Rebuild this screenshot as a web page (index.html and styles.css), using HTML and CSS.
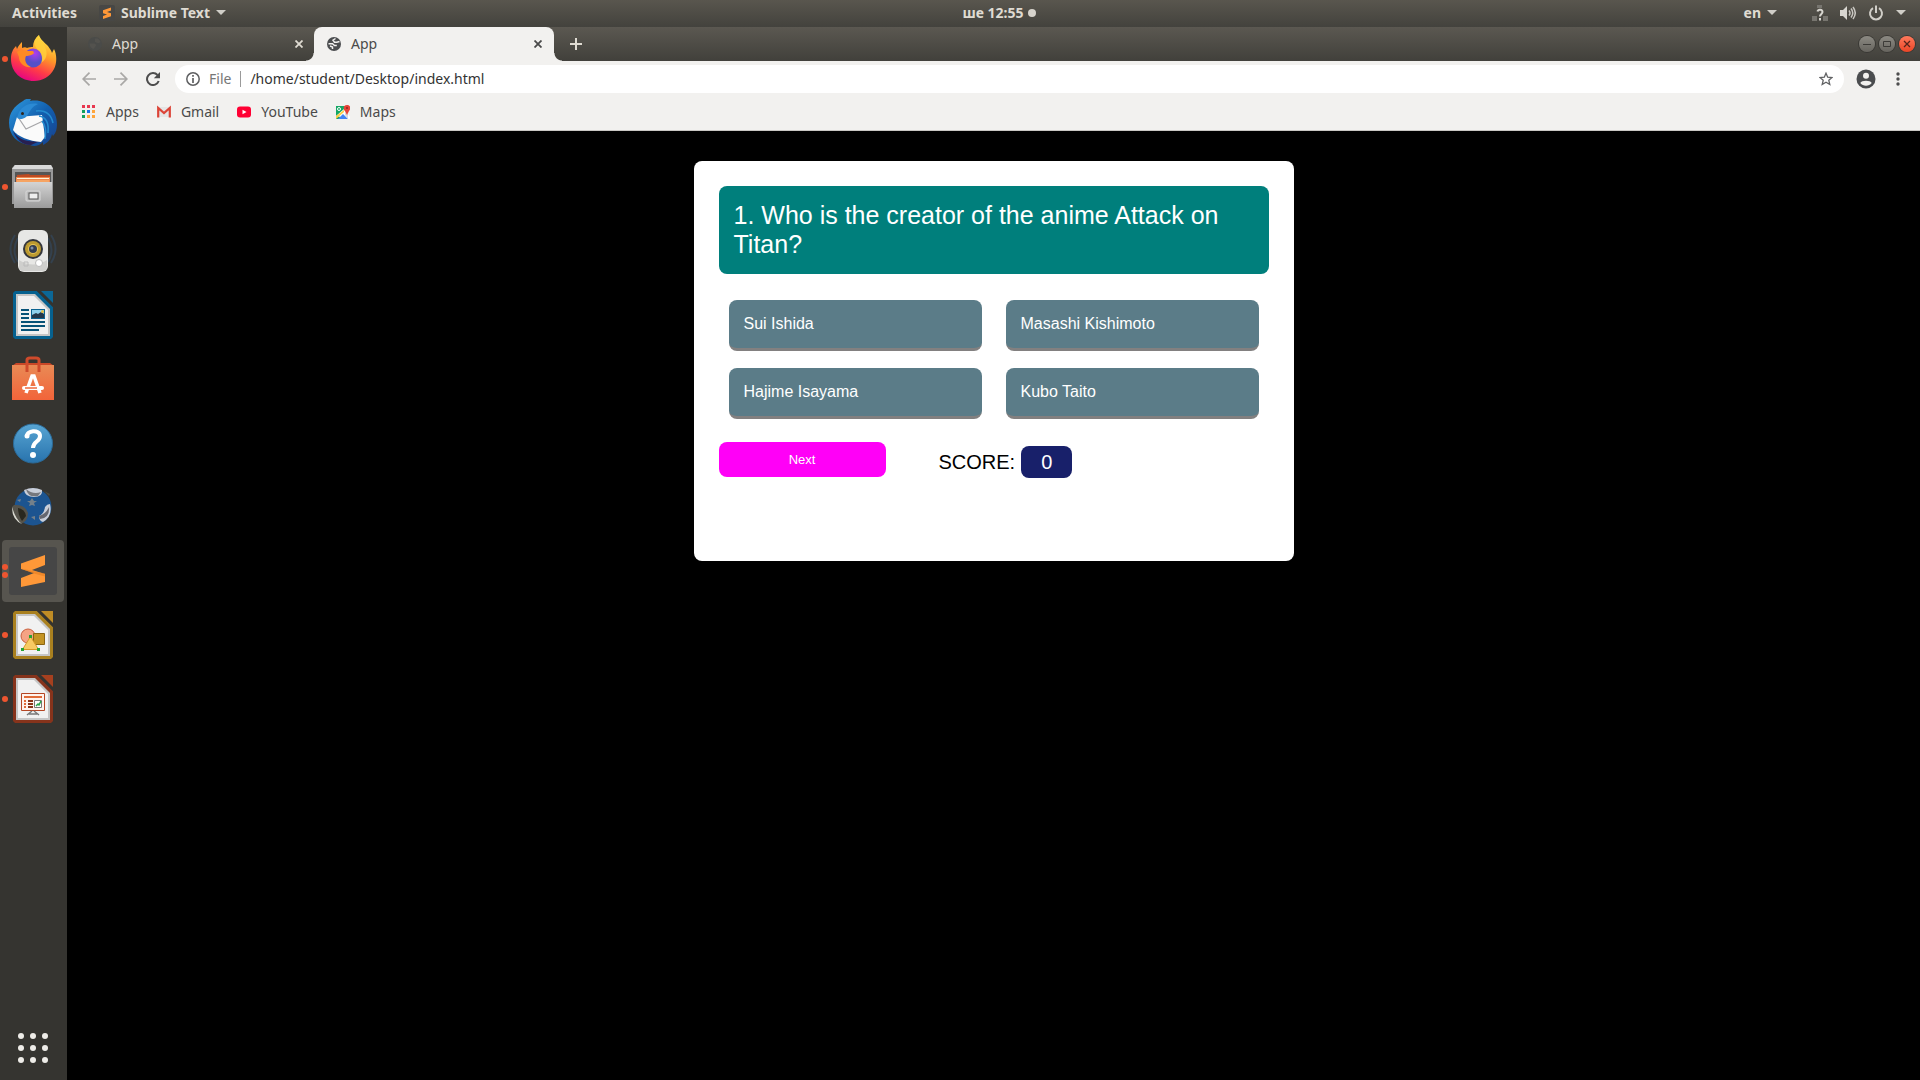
FILE: index.html
```html
<!DOCTYPE html>
<html lang="en">
<head>
<meta charset="utf-8">
<title>App</title>
<link rel="stylesheet" href="styles.css">
</head>
<body class="desktop">
<header class="topbar">
  <div class="topbar-left">
    <button class="top-item" type="button">Activities</button>
    <button class="top-item app-menu" type="button">
      <svg width="16" height="16" viewBox="0 0 16 16" aria-hidden="true"><rect width="16" height="16" rx="2" fill="#474745"/><path fill="#ff9838" d="M4 5.200 12 2.600v3L8 7l4 1.300v3L4 14v-3l4-1.400-4-1.300z"/></svg>
      <span>Sublime Text</span>
      <i class="caret"></i>
    </button>
  </div>
  <button class="top-item clock" type="button">ше 12:55<i class="notice"></i></button>
  <div class="topbar-right">
    <button class="top-item lang" type="button">en<i class="caret"></i></button>
    <button class="top-item status" type="button" aria-label="System">
      <svg width="16" height="16" viewBox="0 0 16 16" aria-hidden="true"><path fill="#77756f" d="M5 0h5v3H5zM0 11h5v5H0zM11 11h5v5h-5z"/><path d="M5.500 6.500C6 4 10.500 4 10.500 7c0 2-2.500 2-2.500 4.500M8 13v2.500" fill="none" stroke="#d8d6d0" stroke-width="2"/></svg>
      <svg width="16" height="16" viewBox="0 0 16 16" aria-hidden="true"><path fill="#d8d6d0" d="M0 5h3l4-4v14l-4-4H0z"/><path d="M9 5.500q2 2.500 0 5M11 3.500q3.500 4.500 0 9M13 2q4.500 6 0 12" fill="none" stroke="#c8c6c0" stroke-width="1.500"/></svg>
      <svg width="16" height="16" viewBox="0 0 16 16" aria-hidden="true"><path d="M5 3.200a6 6 0 1 0 6 0M8 .5V8" fill="none" stroke="#d0cec8" stroke-width="2"/></svg>
      <i class="caret"></i>
    </button>
  </div>
</header>
<div class="workspace">
  <nav class="dock" aria-label="Favourites">
    <button class="dock-item run" type="button" aria-label="Firefox">
      <svg width="48" height="48" viewBox="0 0 48 48" aria-hidden="true">
        <defs><linearGradient id="ff" x1=".75" y1="0" x2=".3" y2="1"><stop offset="0" stop-color="#fff04a"/><stop offset=".4" stop-color="#ff9a28"/><stop offset=".7" stop-color="#ff3c47"/><stop offset="1" stop-color="#e50086"/></linearGradient><radialGradient id="fp" cx=".6" cy=".25"><stop offset="0" stop-color="#b23cf0"/><stop offset="1" stop-color="#5550c8"/></radialGradient></defs>
        <path fill="url(#ff)" d="M30 0c1 4 5 7 9 11 2 3 3 4 4 7l2-4c3 6 3 14 0 20-4 8-12 12-20 12C12 46 2 37 2 24c0-6 2-10 5-13l1 3c1-3 3-5 5-7v6c2-1 4-1 5 0 2-1 4-1 6-1 0-5 2-9 6-12z"/>
        <circle cx="24" cy="23" r="9.500" fill="url(#fp)"/>
        <path fill="#ff8a24" d="M8 17c2-2 5-2 8-1h8l1 2c-1 2-5 3-8 3-2 4 0 9 5 11-7 1-12-4-12-10z"/>
        <path fill="#ffd13c" d="M30 0c-6 5-5 11-1 15 4 3 5 9 3 13 8-5 6-13 3-18-3-4-5-6-5-10z" opacity=".8"/>
      </svg>
    </button>
    <button class="dock-item" type="button" aria-label="Thunderbird">
      <svg width="48" height="48" viewBox="0 0 48 48" aria-hidden="true">
        <defs><linearGradient id="tb" x1="0" y1="0" x2="1" y2="1"><stop offset="0" stop-color="#2f9be0"/><stop offset=".5" stop-color="#125fae"/><stop offset="1" stop-color="#17408c"/></linearGradient></defs>
        <path fill="url(#tb)" d="M14 2q3-3 8-2l-1 2C36-1 48 10 48 25c0 5-1 9-4 12l-1-2c-1 6-5 9-9 11v-3c-4 4-9 5-13 3C8 45 0 36 0 24 0 14 5 7 14 2z"/>
        <path fill="#281f50" d="M4 32c5 8 14 12 27 10l-9 4C13 46 7 40 4 32z"/>
        <path fill="#fafafa" d="M8 18l25-2 3 22-4 5C20 42 9 38 4 31z"/>
        <path d="M9 18l8 12 17-8" fill="none" stroke="#a5a5a8" stroke-width="1.200"/>
        <path fill="#2b8ad4" d="M9 16c2-8 11-13 20-11-7 3-8 8-12 13-4 3-7 2-9 1z"/><circle cx="13.500" cy="14.500" r="1.500" fill="#30251c"/>
        <path d="M27 12c9-1 15 3 17 12M30 17c7 1 10 7 9 17M33 22c4 5 4 9 3 18" fill="none" stroke="#238bcf" stroke-width="1.500"/>
      </svg>
    </button>
    <button class="dock-item run" type="button" aria-label="Files">
      <svg width="48" height="48" viewBox="0 -1 48 48" aria-hidden="true">
        <defs><linearGradient id="fl" x2="0" y2="1"><stop offset="0" stop-color="#d4d4d4"/><stop offset="1" stop-color="#9b9b9b"/></linearGradient></defs>
        <path fill="#999" d="M5 2q0-1 1-1h36l2 3v36H3V4z"/><path fill="#d9d9d9" d="M6 1h36l2 4H3z"/><path fill="#555" d="M6 8h36v12H6z"/>
        <path fill="#bf4a20" d="M8 11l12-1 1 1h20v9H7z"/><path fill="#ee8850" d="M7 13h34v7H7z"/><path fill="#fff2d8" d="M8 14h32v1H8z"/><path fill="#f6a463" d="M8 16h32v3H8z"/>
        <path fill="url(#fl)" d="M5 18h38v26H5z"/><rect x="17" y="27" width="14" height="10" rx="1" fill="#bbb" stroke="#d9d9d9"/><rect x="20" y="29" width="9" height="6" fill="#eee" stroke="#555"/>
      </svg>
    </button>
    <button class="dock-item" type="button" aria-label="Rhythmbox">
      <svg width="48" height="48" viewBox="0 0 48 48" aria-hidden="true">
        <path d="M6 8q-9 14 0 28M9 11q-7 12 0 24M42 8q9 14 0 28M39 11q7 12 0 24" fill="none" stroke="#34414e" stroke-width="2"/>
        <rect x="9" y="3" width="30" height="42" rx="6" fill="#e7e7e5"/><path fill="#cfcfcd" d="M10 33q14 9 28 0v7q0 4-5 4H15q-5 0-5-4z"/>
        <circle cx="24" cy="22" r="10" fill="#34363c"/><circle cx="24" cy="22" r="8" fill="#bc9a30"/><circle cx="24" cy="22" r="5" fill="#e6c455"/><circle cx="24" cy="22" r="4" fill="#343d50"/><circle cx="23" cy="21" r="1.500" fill="#8090a8"/><circle cx="30" cy="36" r="3.500" fill="#fff" stroke="#bcbcbc"/><path d="M15 35h4v4h-4z" fill="none" stroke="#bbb"/>
      </svg>
    </button>
    <button class="dock-item" type="button" aria-label="LibreOffice Writer">
      <svg width="48" height="48" viewBox="0 0 48 48" aria-hidden="true">
        <path fill="#06618f" d="M6 0h22l16 16v30l-2 2H6l-2-2V2z"/><path fill="#34332f" d="M28 0h16v16z"/><path fill="#0c6796" d="M32 0h12v12z"/><path fill="#c5c5c5" d="M7 3h19l15 15v27H7z"/><path fill="#f1f1f1" d="M9 5h16l14 14v24H9z"/>
        <path d="M12 19h8M12 23h8M12 27h8M12 31h24M12 35h24M12 39h18" stroke="#075277" stroke-width="2"/><path fill="#0c6391" d="M22 18h14v10H22z"/><path fill="#8fd1ec" d="M23 19h12v7H23z"/><path fill="#24384b" d="M23 24l4-2 2 1 3-2 3 2v4H23z"/><circle cx="33.500" cy="20.500" r="1.500" fill="#e6be42"/>
      </svg>
    </button>
    <button class="dock-item" type="button" aria-label="Ubuntu Software">
      <svg width="48" height="48" viewBox="0 0 48 48" aria-hidden="true">
        <defs><linearGradient id="us" x2="0" y2="1"><stop offset="0" stop-color="#e98a55"/><stop offset="1" stop-color="#f2643a"/></linearGradient></defs>
        <path fill="#c94727" d="M3 11l4-3h34l4 3z"/><path fill="url(#us)" d="M3 10h42v35H3z"/><path d="M18 17V5q0-2 3-2h6q3 0 3 2v12" fill="none" stroke="#cf4a2b" stroke-width="3"/>
        <path d="M17 38l6-17h2l6 17" fill="none" stroke="#fff" stroke-width="3.500"/><path d="M15 33h18" stroke="#fff" stroke-width="4" stroke-linecap="round"/><path d="M16 33h12" stroke="#ef6a3d" stroke-width="1.500"/>
      </svg>
    </button>
    <button class="dock-item" type="button" aria-label="Help">
      <svg width="48" height="48" viewBox="0 0 48 48" aria-hidden="true">
        <defs><linearGradient id="hp" x2="0" y2="1"><stop offset="0" stop-color="#58a5d3"/><stop offset="1" stop-color="#2873ad"/></linearGradient></defs>
        <circle cx="24" cy="24.500" r="19.500" fill="url(#hp)" stroke="#2b6b99"/><path d="M18 18c-1-7 13-8 13-1 0 6-7 5-7 12" fill="none" stroke="#fff" stroke-width="4"/><circle cx="18" cy="17" r="2.500" fill="#fff"/><circle cx="24" cy="36" r="3" fill="#fff"/>
      </svg>
    </button>
    <button class="dock-item" type="button" aria-label="Globe">
      <svg width="48" height="48" viewBox="0 0 48 48" aria-hidden="true">
        <circle cx="24" cy="24" r="18.500" fill="#1c5490"/><path fill="#4b493f" d="M35 8l6 3-1 2z"/><path fill="#c9ced9" d="M15 7q9-4 18 0 1 7-8 7-9 0-10-7z"/><path fill="#76787e" d="M17 6q7 6 15 3l-3 4q-10 2-12-7z"/>
        <path fill="#55534b" d="M5 22q11-1 14 8 0 8-7 11Q3 34 3 24z"/><path fill="#d8d8cf" d="M3 24q4 13 10 17Q3 37 3 24z"/><path fill="#29281f" d="M9 25q7 1 8 8l-4 5q-4-6-4-13z"/><path fill="#c9ced8" d="M41 21q3 12-7 18-4-1-4-6 5-2 6-9 2-3 5-3z"/><path fill="#65676f" d="M40 24q1 11-9 12-1-2-1-3 7-2 10-9z"/>
        <path fill="#74808a" d="M23 15l2 3h3l-3 2 1 3-3-1-3 1 1-3-3-2h3zM22 34l4-1v4zM8 17l4-1-1 3z"/>
      </svg>
    </button>
    <button class="dock-item run two active" type="button" aria-label="Sublime Text">
      <svg width="48" height="48" viewBox="0 0 48 48" aria-hidden="true">
        <rect width="48" height="48" rx="3" fill="#464646"/><path fill="#ff9838" d="M12 16.500 36 8v10l-13 5 13 4v8l-24 5V31l13-5-13-4z"/><path fill="#e47d20" d="M12 21.500 36 26.500v3L23 26z" opacity=".6"/>
      </svg>
    </button>
    <button class="dock-item run" type="button" aria-label="LibreOffice Draw">
      <svg width="48" height="48" viewBox="0 0 48 48" aria-hidden="true">
        <path fill="#a9801f" d="M6 0h22l16 16v30l-2 2H6l-2-2V2z"/><path fill="#34332f" d="M28 0h16v16z"/><path fill="#bf8c25" d="M32 0h12v12z"/><path fill="#c5c5c5" d="M7 3h19l15 15v27H7z"/><path fill="#f1f1f1" d="M9 5h16l14 14v24H9z"/>
        <circle cx="19" cy="25" r="7" fill="#f5a384" stroke="#c95f3d"/><path fill="#c49424" stroke="#8b6410" d="M24.500 22.500h11v11h-11z"/><path fill="#f8ca63" stroke="#d59a28" d="M21.500 25.500l8 13h-16z"/><path fill="#26a334" d="M20 24h3v3h-3zM12 37h3v3h-3zM28 37h3v3h-3z"/>
      </svg>
    </button>
    <button class="dock-item run" type="button" aria-label="LibreOffice Impress">
      <svg width="48" height="48" viewBox="0 0 48 48" aria-hidden="true">
        <path fill="#86331b" d="M6 0h22l16 16v30l-2 2H6l-2-2V2z"/><path fill="#34332f" d="M28 0h16v16z"/><path fill="#a6401f" d="M32 0h12v12z"/><path fill="#c5c5c5" d="M7 3h19l15 15v27H7z"/><path fill="#f1f1f1" d="M9 5h16l14 14v24H9z"/>
        <path fill="#fff3ed" stroke="#b44523" d="M12.500 18.500h23v17h-23z"/><path d="M15 22h18" stroke="#e06b38" stroke-width="2"/><path d="M15 26h2M15 29h2M15 32h2" stroke="#e06b38" stroke-width="2"/><path d="M19 26h5M19 29h5M19 32h5" stroke="#8a3518" stroke-width="2"/><path fill="#fff" stroke="#777" d="M25.500 25.500h7v7h-7z"/><path d="M27 31l2-2 1 1 2-4" fill="none" stroke="#27a447" stroke-width="1.500"/><path d="M23 36l-5 4M25 36l5 4M20 39h8" stroke="#777" stroke-width="1.500"/>
      </svg>
    </button>
    <button class="dock-item apps" type="button" aria-label="Show Applications">
      <svg width="48" height="48" viewBox="0 0 48 48" fill="#eeece8" aria-hidden="true"><circle cx="12" cy="12" r="3"/><circle cx="24" cy="12" r="3"/><circle cx="36" cy="12" r="3"/><circle cx="12" cy="24" r="3"/><circle cx="24" cy="24" r="3"/><circle cx="36" cy="24" r="3"/><circle cx="12" cy="36" r="3"/><circle cx="24" cy="36" r="3"/><circle cx="36" cy="36" r="3"/></svg>
    </button>
  </nav>
  <div class="browser">
    <div class="tabstrip">
      <div class="tab">
        <svg width="14" height="14" viewBox="0 0 14 14" aria-hidden="true"><circle cx="7" cy="7" r="7" fill="#4a4b49"/><path fill="#53524e" d="M7 1.500h3Q12 3 12.500 5L11 6H9.500L7 5zM1.500 6.500h5l2 1.500-3 4Q2 11 1.500 6.500z"/></svg>
        <a class="tab-title" href="#">App</a>
        <button class="close" type="button" aria-label="Close tab"><svg width="8" height="8" viewBox="0 0 8 8" aria-hidden="true"><path d="M0.500 0.500l7 7M7.500 .5l-7 7" stroke="currentColor" stroke-width="1.800"/></svg></button>
      </div>
      <div class="tab current">
        <svg width="14" height="14" viewBox="0 0 14 14" aria-hidden="true"><circle cx="7" cy="7" r="7" fill="#4b4d4f"/><path d="M8.500 1.500 6 3.200l1.500 2h2.300l2.700-.7M1.500 6.800h4l2 1.700h2.300M3 9l2.500 1v2" fill="none" stroke="#f2f1ef" stroke-width="1.500"/></svg>
        <a class="tab-title" href="#">App</a>
        <button class="close" type="button" aria-label="Close tab"><svg width="8" height="8" viewBox="0 0 8 8" aria-hidden="true"><path d="M0.500 0.500l7 7M7.500 .5l-7 7" stroke="currentColor" stroke-width="1.800"/></svg></button>
      </div>
      <button class="new-tab" type="button" aria-label="New tab"><svg width="12" height="12" viewBox="0 0 12 12" aria-hidden="true"><path d="M6 0v12M0 6h12" stroke="currentColor" stroke-width="2"/></svg></button>
      <div class="window-buttons">
        <button class="win" type="button" aria-label="Minimize"><svg width="16" height="16" viewBox="0 0 16 16" aria-hidden="true"><path d="M4 8.500h8" stroke="#3c3b37"/></svg></button>
        <button class="win" type="button" aria-label="Maximize"><svg width="16" height="16" viewBox="0 0 16 16" aria-hidden="true"><path d="M4.500 5.500h7v5h-7z" stroke="#3c3b37" fill="none"/></svg></button>
        <button class="win quit" type="button" aria-label="Close"><svg width="16" height="16" viewBox="0 0 16 16" aria-hidden="true"><path d="M5 5l6 6M11 5l-6 6" stroke="#55241b" stroke-width="1.300"/></svg></button>
      </div>
    </div>
    <div class="toolbar">
      <button class="tool" type="button" aria-label="Back"><svg width="14" height="14" viewBox="0 0 14 14" aria-hidden="true"><path d="M14 7H1M7.500 .7 1.200 7l6.300 6.300" fill="none" stroke="#a9a8a6" stroke-width="1.700"/></svg></button>
      <button class="tool" type="button" aria-label="Forward"><svg width="14" height="14" viewBox="0 0 14 14" aria-hidden="true"><path d="M0 7h13M6.500 .7 12.800 7l-6.300 6.300" fill="none" stroke="#a9a8a6" stroke-width="1.700"/></svg></button>
      <button class="tool" type="button" aria-label="Reload"><svg width="14" height="14" viewBox="0 0 14 14" aria-hidden="true"><path d="M12.700 9A6 6 0 1 1 11.500 3" fill="none" stroke="#4d4d4d" stroke-width="2"/><path fill="#4d4d4d" d="M14 0v6.200H7.800z"/></svg></button>
      <div class="omnibox">
        <svg width="14" height="14" viewBox="0 0 14 14" aria-hidden="true"><circle cx="7" cy="7" r="6.200" fill="none" stroke="#5f6062" stroke-width="1.500"/><path d="M7 6v5M7 3v1.700" stroke="#5f6062" stroke-width="1.700"/></svg>
        <label class="scheme" for="address">File</label>
        <input class="address" id="address" type="text" value="/home/student/Desktop/index.html">
        <button class="tool star" type="button" aria-label="Bookmark this page"><svg width="14" height="14" viewBox="0 0 14 14" aria-hidden="true"><path d="M7 1.200l1.700 4 4.300.3-3.200 2.800 1 4.200L7 10.300l-3.800 2.200 1-4.200L1 5.500l4.300-.3z" fill="none" stroke="#606163" stroke-width="1.300"/></svg></button>
      </div>
      <button class="tool profile" type="button" aria-label="Profile"><svg width="20" height="20" viewBox="0 0 20 20" aria-hidden="true"><circle cx="10" cy="10" r="9.500" fill="#4a4c4e"/><circle cx="10" cy="6.700" r="3" fill="#f2f1ef"/><path fill="#f2f1ef" d="M4.300 14C5.300 11 14.700 11 15.700 14 13 17.500 7 17.500 4.300 14z"/></svg></button>
      <button class="tool" type="button" aria-label="Menu"><svg width="14" height="14" viewBox="0 0 14 14" fill="#4d4d4d" aria-hidden="true"><circle cx="7" cy="2" r="1.700"/><circle cx="7" cy="7" r="1.700"/><circle cx="7" cy="12" r="1.700"/></svg></button>
    </div>
    <nav class="bookmarks" aria-label="Bookmarks">
      <a class="mark" href="#"><svg width="14" height="14" viewBox="0 0 14 14" aria-hidden="true"><path fill="#e8384f" d="M0 0h3v3H0zM5 0h3v3H5zM10 0h3v3h-3z"/><path fill="#12a05c" d="M0 5h3v3H0zM0 10h3v3H0z"/><path fill="#1a73e8" d="M5 5h3v3H5z"/><path fill="#ffa53a" d="M10 5h3v3h-3zM5 10h3v3H5zM10 10h3v3h-3z"/></svg>Apps</a>
      <a class="mark" href="#"><svg width="14" height="14" viewBox="0 0 14 14" aria-hidden="true"><path fill="#e5e5e5" d="M1 2h12v10H1z"/><path d="M1.200 12.500V3L7 8l5.800-5v9.500" fill="none" stroke="#dc4437" stroke-width="2.200"/></svg>Gmail</a>
      <a class="mark" href="#"><svg width="14" height="14" viewBox="0 0 14 14" aria-hidden="true"><rect y="1.500" width="14" height="11" rx="3" fill="#ff0033"/><path fill="#fff" d="M5.500 4.800 9.500 7l-4 2.200z"/></svg>YouTube</a>
      <a class="mark" href="#"><svg width="14" height="14" viewBox="0 0 14 14" aria-hidden="true"><path fill="#16a765" d="M0 1h10v13H0z"/><path fill="#fff" d="M0 11 8 4l6 8v2z"/><path fill="#ffcf44" d="M0 11 8 5v2l-8 7z"/><path fill="#4285f4" d="M2 14l5-5 5 5z"/><path fill="#dadada" d="M9 7l3 2v5l-3-4z"/><circle cx="3" cy="4" r="1.500" fill="none" stroke="#fff"/><path fill="#e84338" d="M11 0c4 0 4 4 2 6l-2 4-2-4c-2-2-2-6 2-6z"/><circle cx="11" cy="3" r="1" fill="#8e2820"/></svg>Maps</a>
    </nav>
    <main class="page">
      <section class="quiz">
        <h1 class="question">1. Who is the creator of the anime Attack on Titan?</h1>
        <div class="options">
          <button class="option" type="button">Sui Ishida</button>
          <button class="option" type="button">Masashi Kishimoto</button>
          <button class="option" type="button">Hajime Isayama</button>
          <button class="option" type="button">Kubo Taito</button>
        </div>
        <div class="actions">
          <button class="next" type="button">Next</button>
          <p class="score">SCORE: <output class="points">0</output></p>
        </div>
      </section>
    </main>
  </div>
</div>
</body>
</html>
```
FILE: styles.css
```css
* { box-sizing: border-box; }
button { margin: 0; padding: 0; border: 0; background: none; color: inherit; font: inherit; }
svg { display: block; flex: none; }
a { color: inherit; text-decoration: none; }

.desktop {
  margin: 0;
  min-height: 100vh;
  display: flex;
  flex-direction: column;
  background: #000;
  font: 14px/20px "Noto Sans", "Open Sans", sans-serif;
}

/* System bar */
.topbar {
  display: grid;
  grid-template-columns: 1fr auto 1fr;
  align-items: center;
  height: 27px;
  padding: 0 14px 2px 12px;
  background: linear-gradient(#59564e, #43423d);
  color: #dfdbd2;
  font-weight: 700;
}
.topbar-left, .topbar-right, .top-item { display: flex; align-items: center; }
.topbar-left { gap: 22px; }
.topbar-right { justify-content: flex-end; gap: 35px; }
.app-menu, .lang { gap: 6px; }
.clock { gap: 4px; padding-left: 80px; }
.status { gap: 12px; }
.caret { border: 5px solid transparent; border-top-color: #d0cec8; border-bottom: 0; }
.notice { width: 8px; height: 8px; border-radius: 50%; background: #d6d3cc; }

.workspace { flex: 1; display: flex; }

/* Dock */
.dock {
  width: 67px;
  flex: none;
  display: flex;
  flex-direction: column;
  align-items: center;
  gap: 2px;
  padding: 1px 1px 1px 0;
  background: #353430;
}
.dock-item {
  position: relative;
  display: flex;
  align-items: center;
  justify-content: center;
  width: 62px;
  height: 62px;
  border-radius: 4px;
}
.dock-item.active { background: #57554f; }
.dock-item.apps { margin-top: auto; }
.run::before {
  content: "";
  position: absolute;
  left: 0;
  top: 28px;
  width: 6px;
  height: 6px;
  border-radius: 50%;
  background: #ee5530;
}
.two::before { top: 24px; box-shadow: 0 8px #ee5530; }

/* Browser window */
.browser { flex: 1; min-width: 0; display: flex; flex-direction: column; }
.tabstrip {
  display: flex;
  height: 34px;
  background: linear-gradient(#5b5851, #41403b);
  color: #dfdbd2;
}
.tab {
  display: flex;
  align-items: center;
  gap: 10px;
  width: 247px;
  padding: 0 7px 0 21px;
}
.tab-title { flex: 1; }
.current {
  position: relative;
  width: 240px;
  padding: 0 8px 0 13px;
  border-radius: 8px 8px 0 0;
  background: #f2f1ef;
  color: #4a4a4a;
}
.current::before, .current::after {
  content: "";
  position: absolute;
  bottom: 0;
  width: 8px;
  height: 8px;
}
.current::before { right: 100%; background: radial-gradient(circle at 0 0, transparent 7px, #f2f1ef 8px); }
.current::after { left: 100%; background: radial-gradient(circle at 100% 0, transparent 7px, #f2f1ef 8px); }
.close, .new-tab { display: flex; align-items: center; padding: 4px; }
.new-tab { margin-left: 12px; }
.window-buttons { display: flex; align-items: center; gap: 4px; margin-left: auto; padding-right: 5px; }
.win {
  width: 16px;
  height: 16px;
  border-radius: 50%;
  background: linear-gradient(#8c8a83, #66645e);
  box-shadow: 0 0 0 1px #3a3935;
}
.quit { background: linear-gradient(#ff7a5c, #ea4526); }

.toolbar {
  display: flex;
  align-items: center;
  gap: 18px;
  padding: 4px 15px;
  background: #f2f1ef;
}
.omnibox {
  flex: 1;
  display: flex;
  align-items: center;
  height: 28px;
  margin-left: -3px;
  padding: 0 11px;
  border-radius: 14px;
  background: #fff;
}
.scheme {
  margin-left: 9px;
  padding-right: 9px;
  border-right: 1px solid #9a9a9a;
  color: #777;
  line-height: 16px;
}
.address {
  flex: 1;
  min-width: 0;
  padding: 0 9px;
  border: 0;
  outline: 0;
  background: none;
  color: #333;
  font: inherit;
}
.profile { margin: 0 -3px 0 -6px; }

.bookmarks {
  display: flex;
  gap: 18px;
  padding: 5px 15px 8px;
  border-bottom: 1px solid #c9c7c4;
  background: #f2f1ef;
  color: #4a4a4a;
}
.mark { display: flex; align-items: center; gap: 10px; }

/* Quiz page */
.page {
  flex: 1;
  padding: 30px 20px;
  background: #000;
  font-family: "Liberation Sans", Arial, sans-serif;
}
.quiz {
  max-width: 600px;
  min-height: 400px;
  margin: 0 auto;
  padding: 25px;
  border-radius: 8px;
  background: #fff;
}
.question {
  margin: 0;
  padding: 15px;
  border-radius: 8px;
  background: #007f7c;
  color: #fff;
  font-size: 25px;
  font-weight: 400;
  line-height: 29px;
}
.options {
  display: grid;
  grid-template-columns: 1fr 1fr;
  gap: 17px 24px;
  margin: 26px 10px 23px;
}
.option {
  padding: 15px;
  border-bottom: 3px solid #828080;
  border-radius: 8px;
  background: #5b7c88;
  color: #fff;
  font-size: 16px;
  line-height: 18px;
  text-align: left;
}
.actions { display: flex; align-items: flex-start; gap: 53px; }
.next {
  width: 167px;
  height: 35px;
  border-radius: 8px;
  background: #ff00f7;
  color: #fff;
  font-size: 13px;
}
.score { display: flex; align-items: center; gap: 6px; margin: 4px 0 0; font-size: 20px; }
.points {
  padding: 5px 20px;
  border-radius: 8px;
  background: #18206a;
  color: #fff;
  line-height: 22px;
}
```
